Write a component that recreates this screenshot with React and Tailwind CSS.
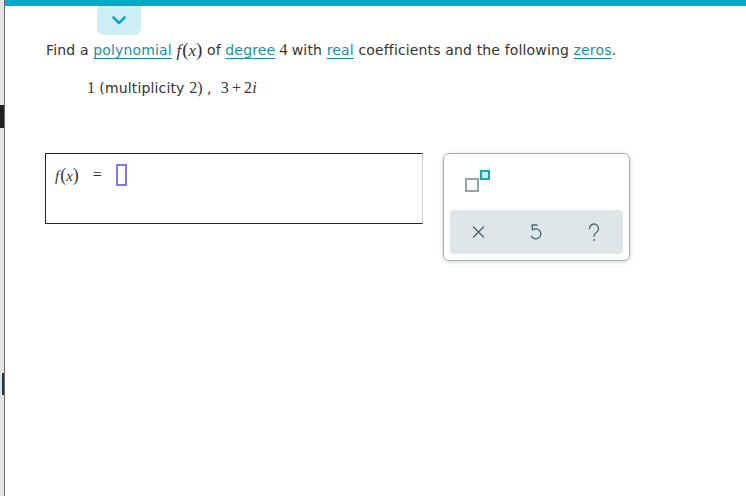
import React from "react";

const serif = { fontFamily: '"Liberation Serif", serif' };

function Link({ children }) {
  return (
    <span className="text-[#1a8fa6] underline underline-offset-[3px] decoration-[1px]">{children}</span>
  );
}

function Fx({ size = "text-[17px]", paren = "text-[19px]" }) {
  return (
    <span className={`font-['Liberation_Serif',serif] ${size} text-[#333] tracking-normal`}>
      <span className="italic">f</span>
      <span className={`${paren} ml-[1px]`}>(</span>
      <span className="italic">x</span>
      <span className={paren}>)</span>
    </span>
  );
}

export default function App() {
  return (
    <div className="w-[746px] h-[496px] flex bg-white overflow-hidden font-['DejaVu_Sans',sans-serif] text-[#333]">
      {/* left strip */}
      <div className="w-[4px] bg-[#e4e4e4] flex flex-col shrink-0">
        <div className="h-[105px]" />
        <div className="h-[23px] bg-[#202020]" />
        <div className="h-[245px]" />
        <div className="h-[22px] bg-[#173b4f] ml-[2px]" />
      </div>
      <div className="w-[1px] bg-[#6a6a6a] shrink-0" />

      <div className="flex-1 flex flex-col">
        <div className="h-[6px] bg-[#03abc7]" />
        <div className="ml-[92px] w-[44px] h-[29px] bg-[#cdeef5] rounded-b-[7px] flex items-center justify-center">
          <svg width="14" height="9" viewBox="0 0 14 9">
            <polyline points="1.5,1.5 7,7 12.5,1.5" fill="none" stroke="#12a7c4" strokeWidth="2.6" strokeLinecap="round" strokeLinejoin="round" />
          </svg>
        </div>

        <div className="pl-[41px] mt-[4px] h-[22px] flex items-center text-[14px] tracking-[0.15px] whitespace-nowrap">
          <span>Find a&nbsp;</span>
          <Link>polynomial</Link>
          <span>&nbsp;</span>
          <Fx />
          <span>&nbsp;of&nbsp;</span>
          <Link>degree</Link>
          <span style={serif} className="text-[16px]">&nbsp;4&nbsp;</span>
          <span>with&nbsp;</span>
          <Link>real</Link>
          <span>&nbsp;coefficients and the following&nbsp;</span>
          <Link>zeros</Link>
          <span>.</span>
        </div>

        <div className="pl-[82px] mt-[16px] h-[22px] flex items-center text-[14px] tracking-[0.15px] whitespace-nowrap">
          <span style={serif} className="text-[16px]">1&nbsp;</span>
          <span>(multiplicity&nbsp;</span>
          <span style={serif} className="text-[16px]">2)&nbsp;</span>
          <span>,&nbsp;&nbsp;</span>
          <span style={serif} className="text-[16px]">
            3<span className="mx-[3px]">+</span>2<span className="italic">i</span>
          </span>
        </div>

        <div className="pl-[40px] mt-[54px] flex items-start gap-[20px]">
          <div className="w-[378px] h-[71px] border border-[#222] border-r-[#cfcfcf] flex items-start pl-[9px] pt-[9px]">
            <div className="flex items-center h-[24px]">
              <Fx size="text-[15px]" paren="text-[18px]" />
              <span style={serif} className="text-[16px] ml-[14px]">=</span>
              <div className="ml-[14px] w-[11px] h-[22px] border-[2px] border-[#7878ff]" />
            </div>
          </div>

          <div className="w-[187px] h-[108px] rounded-[6px] border border-[#9fb0b6] shadow-[0_1px_4px_rgba(0,0,0,0.18)] flex flex-col px-[6px] pt-[16px]">
            <div className="h-[40px] pl-[15px]">
              <div className="relative w-[26px] h-[22px]">
                <div className="absolute left-0 top-[8px] w-[14px] h-[14px] border-[2px] border-[#8ea3aa] bg-white" />
                <div className="absolute left-[15px] top-0 w-[10px] h-[10px] border-[2px] border-[#17a5c0] bg-[#c6eef4]" />
              </div>
            </div>
            <div className="h-[44px] bg-[#dfe6e9] rounded-[4px] grid grid-cols-3 place-items-center">
              <svg width="13" height="12" viewBox="0 0 13 12">
                <path d="M1.5 1 L11.5 11 M11.5 1 L1.5 11" stroke="#46646f" strokeWidth="1.3" strokeLinecap="round" />
              </svg>
              <svg width="14" height="18" viewBox="0 0 14 18">
                <path d="M8 2 H3 L3.6 7 A5 5 0 1 1 2.4 13.2" fill="none" stroke="#46646f" strokeWidth="1.3" strokeLinecap="round" strokeLinejoin="round" />
              </svg>
              <svg width="14" height="19" viewBox="0 0 14 19">
                <path d="M2.5 5.5 A4.5 4.5 0 1 1 9.6 9.2 C7.8 10.3 7 11.3 7 13.3" fill="none" stroke="#46646f" strokeWidth="1.3" strokeLinecap="round" />
                <circle cx="7" cy="17" r="0.9" fill="#46646f" />
              </svg>
            </div>
          </div>
        </div>
      </div>
    </div>
  );
}
